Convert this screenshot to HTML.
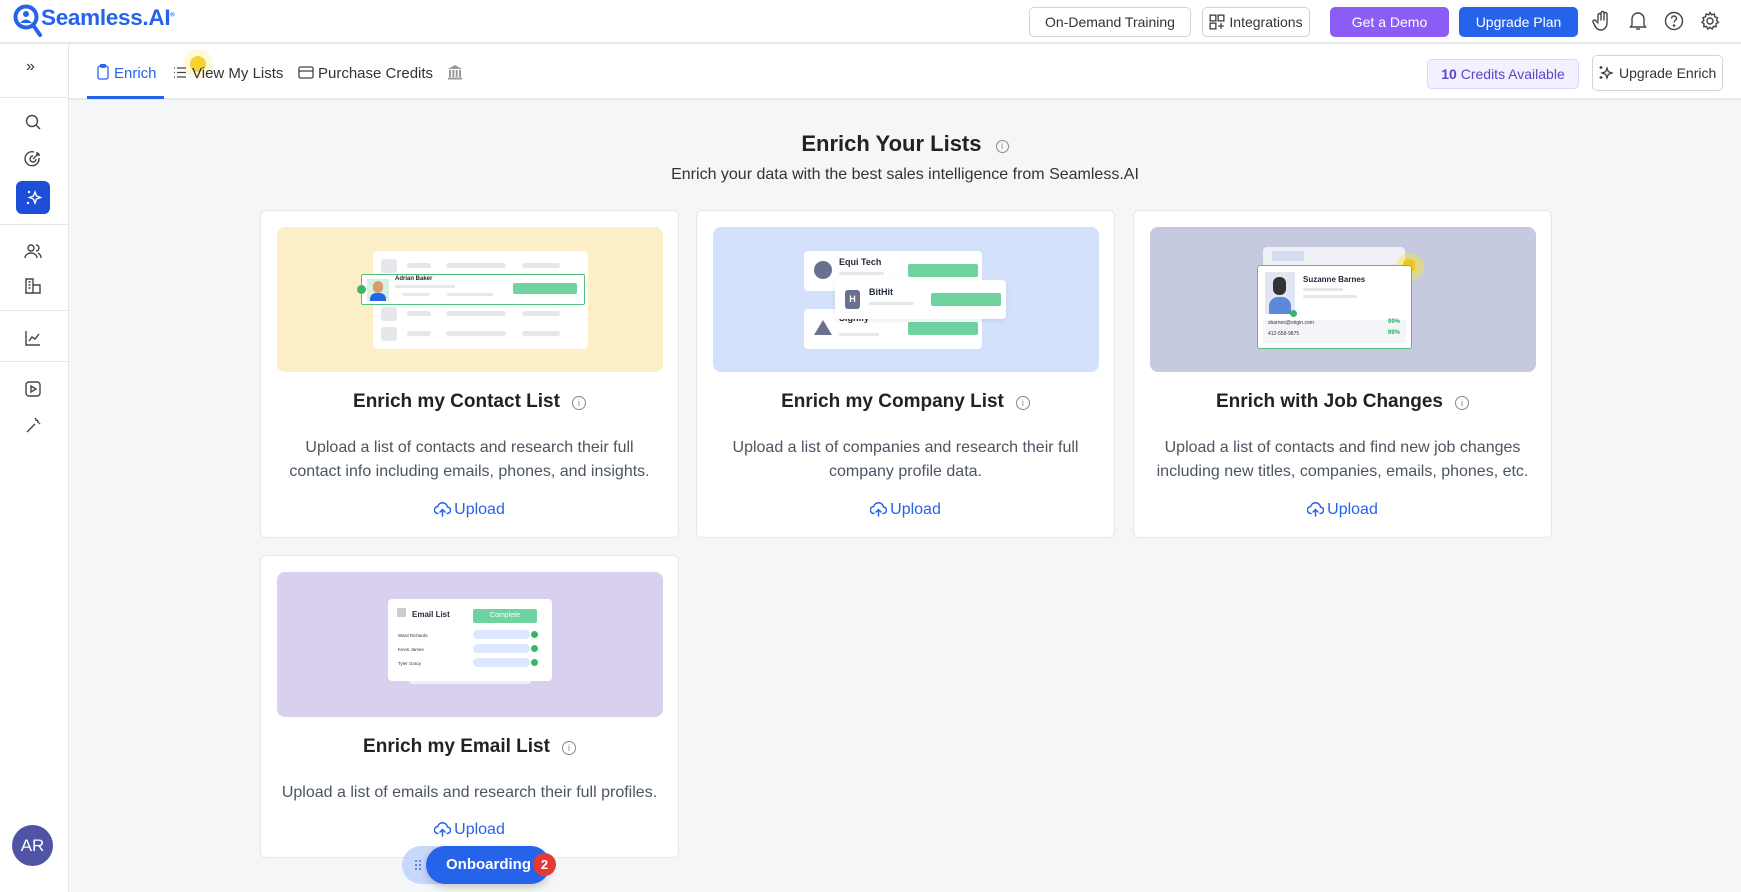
<!DOCTYPE html>
<html><head><meta charset="utf-8"><style>
*{box-sizing:border-box;margin:0;padding:0}
body{width:1741px;height:892px;overflow:hidden;font-family:"Liberation Sans",sans-serif;background:#f5f6f8;position:relative;color:#1f2937}
.abs{position:absolute;white-space:nowrap}
.hdr{left:0;top:0;width:1741px;height:44px;background:#fff;border-bottom:2px solid #e8e9ec}
.btn{position:absolute;top:7px;height:30px;border-radius:5px;font-size:14px;display:flex;align-items:center;justify-content:center;gap:4px;white-space:nowrap}
.side{left:0;top:44px;width:69px;height:848px;background:#fff;border-right:1px solid #e5e7eb}
.sep{position:absolute;left:0;width:68px;height:1px;background:#e5e7eb}
.si{position:absolute;left:24px;width:18px;height:18px}
.tabs{left:69px;top:45px;width:1672px;height:55px;background:#fff;border-bottom:2px solid #e8e9ec}
.card{position:absolute;background:#fff;border:1px solid #e5e7eb;border-radius:6px;width:419px;text-align:center}
.img{position:absolute;left:16px;top:16px;width:386px;height:145px;border-radius:8px;overflow:hidden}
.ct{position:absolute;left:0;width:100%;top:180px;font-size:19px;font-weight:bold;color:#222}
.ct i{display:inline-block;width:14px;height:14px;border:1.3px solid #888;border-radius:50%;margin-left:12px;vertical-align:1px;font-style:normal;font-size:9px;color:#888;line-height:12px;font-weight:normal}
.cd{position:absolute;left:17px;right:17px;top:225px;font-size:16px;line-height:24px;color:#4b5563}
.up{position:absolute;left:0;width:100%;font-size:16px;color:#2563eb}
.up svg{vertical-align:-3px;margin-right:3px}
.w{position:absolute;background:#fff;border-radius:4px}
.g{position:absolute;background:#e5e7eb;border-radius:3px}
.gr{position:absolute;background:#6fd3a0;border-radius:2px}
</style></head><body>
<div class="abs hdr">
 <svg class="abs" style="left:13px;top:4px" width="30" height="34" viewBox="0 0 30 34"><circle cx="13" cy="13" r="10.5" fill="none" stroke="#2563eb" stroke-width="4"/><line x1="20" y1="21" x2="27" y2="31" stroke="#2563eb" stroke-width="4" stroke-linecap="round"/><circle cx="13" cy="10" r="3" fill="#2563eb"/><path d="M7 19 Q13 12 19 19Z" fill="#2563eb"/></svg>
 <div class="abs" style="left:41px;top:5px;font-size:22.5px;font-weight:bold;color:#2563eb;letter-spacing:-0.3px">Seamless.AI<sup style="font-size:6px">®</sup></div>
 <div class="btn" style="left:1029px;width:162px;border:1px solid #d1d5db;color:#333">On-Demand Training</div>
 <div class="btn" style="left:1202px;width:108px;border:1px solid #d1d5db;color:#333"><svg width="16" height="16" viewBox="0 0 14 14" fill="none" stroke="#444" stroke-width="1.2"><rect x="1" y="1" width="5" height="5"/><rect x="8" y="1" width="5" height="5"/><rect x="1" y="8" width="5" height="5"/><path d="M10.5 8v5M8 10.5h5"/></svg>Integrations</div>
 <div class="btn" style="left:1330px;width:119px;background:#8b5cf6;color:#fff">Get a Demo</div>
 <div class="btn" style="left:1459px;width:119px;background:#2563eb;color:#fff">Upgrade Plan</div>
 <svg class="abs" style="left:1592px;top:10px" width="20" height="22" viewBox="0 0 20 22" fill="none" stroke="#444" stroke-width="1.4" stroke-linecap="round"><path d="M6 11V5a1.5 1.5 0 013 0v5M9 10V3a1.5 1.5 0 013 0v7M12 10V4a1.5 1.5 0 013 0v9c0 4-3 7-6 7s-5-2-6-4l-2-4a1.5 1.5 0 012.5-1.5L6 13"/></svg>
 <svg class="abs" style="left:1629px;top:11px" width="18" height="20" viewBox="0 0 18 20" fill="none" stroke="#444" stroke-width="1.4"><path d="M3 14V8a6 6 0 0112 0v6l1.5 2h-15z"/><path d="M7 18h4"/></svg>
 <svg class="abs" style="left:1664px;top:11px" width="20" height="20" viewBox="0 0 20 20" fill="none" stroke="#444" stroke-width="1.4"><circle cx="10" cy="10" r="8.5"/><path d="M7.5 7.5a2.5 2.5 0 115 0c0 2-2.5 2-2.5 4"/><circle cx="10" cy="14.5" r=".6" fill="#444"/></svg>
 <svg class="abs" style="left:1700px;top:11px" width="20" height="20" viewBox="0 0 20 20" fill="none" stroke="#444" stroke-width="1.4"><circle cx="10" cy="10" r="3"/><path d="M10 1.5l1.6 2.3 2.7-.8.5 2.8 2.7.9-1 2.6 1.9 2-2.4 1.5.2 2.8-2.8-.1-1.2 2.5-2.2-1.7-2.2 1.7-1.2-2.5-2.8.1.2-2.8L2 11.3l1.9-2-1-2.6 2.7-.9.5-2.8 2.7.8z"/></svg>
</div>
<div class="abs side">
 <div class="abs" style="left:26px;top:14px;font-size:16px;color:#333">»</div>
 <div class="sep" style="top:53px"></div>
 <svg class="si" style="top:69px" viewBox="0 0 18 18" fill="none" stroke="#444" stroke-width="1.4"><circle cx="8" cy="8" r="5.5"/><path d="M12 12l4 4"/></svg>
 <svg class="si" style="top:106px" viewBox="0 0 18 18" fill="none" stroke="#444" stroke-width="1.4"><path d="M15 8a7 7 0 11-5-6"/><path d="M12 9a3 3 0 11-3-3"/><path d="M9 9l6-6M13 2v3h3"/></svg>
 <div class="abs" style="left:16px;top:137px;width:34px;height:33px;background:#1d4ed8;border-radius:6px"></div>
 <svg class="si" style="top:145px;left:25px" viewBox="0 0 18 18" fill="#fff"><path d="M10 3l1.5 4 4 1.5-4 1.5L10 14l-1.5-4-4-1.5 4-1.5z" fill="none" stroke="#fff" stroke-width="1.4"/><circle cx="4" cy="3" r="1.2"/><circle cx="3" cy="14" r="1.2"/></svg>
 <div class="sep" style="top:180px"></div>
 <svg class="si" style="top:198px" viewBox="0 0 18 18" fill="none" stroke="#444" stroke-width="1.4"><circle cx="7" cy="6" r="3"/><path d="M1 16c0-3 3-5 6-5s6 2 6 5M12 3a3 3 0 010 6M14 11c2 1 3 3 3 5"/></svg>
 <svg class="si" style="top:233px" viewBox="0 0 18 18" fill="none" stroke="#444" stroke-width="1.4"><path d="M2 16V2h7v14M9 8h7v8H1M4.5 5h2M4.5 8h2M4.5 11h2"/></svg>
 <div class="sep" style="top:266px"></div>
 <svg class="si" style="top:285px" viewBox="0 0 18 18" fill="none" stroke="#444" stroke-width="1.4"><path d="M2 2v14h14M5 12l3-4 3 2 4-5"/></svg>
 <div class="sep" style="top:317px"></div>
 <svg class="si" style="top:336px" viewBox="0 0 18 18" fill="none" stroke="#444" stroke-width="1.4"><rect x="2" y="2" width="14" height="14" rx="3"/><path d="M7 6l5 3-5 3z"/></svg>
 <svg class="si" style="top:372px" viewBox="0 0 18 18" fill="none" stroke="#444" stroke-width="1.4"><path d="M3 16l8-8M12 3v2M15 6h-2M14 4l-1 1M11 2l1 1M16 8l-1-1"/></svg>
 <div class="abs" style="left:12px;top:781px;width:41px;height:41px;border-radius:50%;background:#4f54a6;color:#fff;font-size:17px;text-align:center;line-height:41px">AR</div>
</div>
<div class="abs tabs">
 <svg class="abs" style="left:28px;top:19px" width="12" height="16" viewBox="0 0 12 16" fill="none" stroke="#2563eb" stroke-width="1.3"><rect x="1" y="2" width="10" height="13" rx="2"/><rect x="3.5" y="0.7" width="5" height="2.5" rx="1"/></svg>
 <div class="abs" style="left:45px;top:20px;font-size:15px;color:#2563eb">Enrich</div>
 <div class="abs" style="left:18px;top:51px;width:77px;height:3px;background:#2563eb"></div>
 <div class="abs" style="left:114px;top:4px;width:30px;height:30px;border-radius:50%;background:rgba(250,220,60,.18)"></div>
 <div class="abs" style="left:121px;top:11px;width:16px;height:16px;border-radius:50%;background:#f5d32f"></div>
 <svg class="abs" style="left:105px;top:22px" width="12" height="11" viewBox="0 0 12 11" stroke="#444" stroke-width="1.3"><path d="M0 1h1M3 1h9M0 5.5h1M3 5.5h9M0 10h1M3 10h9"/></svg>
 <div class="abs" style="left:123px;top:20px;font-size:15px;color:#333">View My Lists</div>
 <svg class="abs" style="left:229px;top:21px" width="16" height="13" viewBox="0 0 16 13" fill="none" stroke="#444" stroke-width="1.3"><rect x="1" y="1" width="14" height="11" rx="1.5"/><path d="M1 5h14"/></svg>
 <div class="abs" style="left:249px;top:20px;font-size:15px;color:#333">Purchase Credits</div>
 <svg class="abs" style="left:378px;top:19px" width="16" height="16" viewBox="0 0 16 16" fill="#999"><path d="M8 1l7 4H1z"/><rect x="2" y="6" width="2" height="7"/><rect x="5.3" y="6" width="2" height="7"/><rect x="8.7" y="6" width="2" height="7"/><rect x="12" y="6" width="2" height="7"/><rect x="1" y="13.5" width="14" height="2"/></svg>
 <div class="abs" style="left:1358px;top:14px;width:152px;height:30px;border:1px solid #ddd6fe;background:#f3f0ff;border-radius:5px;font-size:14px;color:#5b45c9;text-align:center;line-height:28px"><b>10</b> Credits Available</div>
 <div class="abs" style="left:1523px;top:10px;width:131px;height:36px;border:1px solid #d1d5db;border-radius:5px;font-size:14px;color:#333;line-height:34px;padding-left:26px">Upgrade Enrich</div>
 <svg class="abs" style="left:1530px;top:20px" width="15" height="15" viewBox="0 0 15 15" fill="none" stroke="#333" stroke-width="1.2"><path d="M8 3l1.3 3.7L13 8l-3.7 1.3L8 13l-1.3-3.7L3 8l3.7-1.3z"/><path d="M2 1v3M.5 2.5h3M2 11v3M.5 12.5h3"/></svg>
</div>
<div class="abs" style="left:69px;top:131px;width:1672px;text-align:center;font-size:22px;font-weight:bold;color:#222">Enrich Your Lists <span style="display:inline-block;width:13px;height:13px;border:1.3px solid #888;border-radius:50%;margin-left:8px;font-size:9px;color:#888;line-height:11px;font-weight:normal;vertical-align:2px">i</span></div>
<div class="abs" style="left:69px;top:166px;width:1672px;text-align:center;font-size:16px;color:#333">Enrich your data with the best sales intelligence from Seamless.AI</div>

<!-- Card 1 -->
<div class="card" style="left:260px;top:210px;height:328px">
 <div class="img" style="background:#fcefc8">
  <div class="w" style="left:96px;top:24px;width:215px;height:98px"></div>
  <div class="g" style="left:104px;top:32px;width:16px;height:14px"></div><div class="g" style="left:130px;top:36px;width:24px;height:5px"></div><div class="g" style="left:169px;top:36px;width:60px;height:5px"></div><div class="g" style="left:245px;top:36px;width:38px;height:5px"></div>
  <div class="g" style="left:104px;top:80px;width:16px;height:14px"></div><div class="g" style="left:130px;top:84px;width:24px;height:5px"></div><div class="g" style="left:169px;top:84px;width:60px;height:5px"></div><div class="g" style="left:245px;top:84px;width:38px;height:5px"></div>
  <div class="g" style="left:104px;top:100px;width:16px;height:14px"></div><div class="g" style="left:130px;top:104px;width:24px;height:5px"></div><div class="g" style="left:169px;top:104px;width:60px;height:5px"></div><div class="g" style="left:245px;top:104px;width:38px;height:5px"></div>
  <div class="w" style="left:84px;top:47px;width:224px;height:31px;border:1px solid #4fc080;border-radius:2px"></div>
  <div class="abs" style="left:90px;top:52px;width:22px;height:22px;background:#d8f0e0"></div>
  <div class="abs" style="left:96px;top:54px;width:10px;height:12px;border-radius:5px;background:#d89a70"></div>
  <div class="abs" style="left:93px;top:66px;width:16px;height:8px;border-radius:6px 6px 0 0;background:#2563eb"></div>
  <div class="abs" style="left:80px;top:58px;width:9px;height:9px;border-radius:50%;background:#3bb56a"></div>
  <div class="abs" style="left:118px;top:49px;font-size:6px;font-weight:bold;color:#222">Adrian Baker</div>
  <div class="g" style="left:118px;top:58px;width:60px;height:3px"></div><div class="g" style="left:125px;top:66px;width:28px;height:3px"></div><div class="g" style="left:170px;top:66px;width:46px;height:3px"></div>
  <div class="gr" style="left:236px;top:56px;width:64px;height:11px"></div>
 </div>
 <div class="ct">Enrich my Contact List<i>i</i></div>
 <div class="cd">Upload a list of contacts and research their full<br>contact info including emails, phones, and insights.</div>
 <div class="up" style="top:290px"><svg width="17" height="15" viewBox="0 0 17 15" fill="none" stroke="#2563eb" stroke-width="1.5" stroke-linecap="round"><path d="M4 11.5a3.5 3.5 0 01-.3-7A5 5 0 0113.5 5a3.2 3.2 0 01-.5 6.5"/><path d="M8.5 14V7.5M6 10l2.5-2.5L11 10"/></svg>Upload</div>
</div>

<!-- Card 2 -->
<div class="card" style="left:696px;top:210px;height:328px">
 <div class="img" style="background:#d3e1fa">
  <div class="w" style="left:91px;top:24px;width:178px;height:40px"></div>
  <div class="abs" style="left:101px;top:34px;width:18px;height:18px;border-radius:50%;background:#6a7190"></div>
  <div class="abs" style="left:126px;top:30px;font-size:9px;font-weight:bold">Equi Tech</div>
  <div class="g" style="left:126px;top:45px;width:45px;height:3px"></div>
  <div class="gr" style="left:195px;top:37px;width:70px;height:13px"></div>
  <div class="w" style="left:91px;top:82px;width:178px;height:40px"></div>
  <div class="abs" style="left:101px;top:93px;width:0;height:0;border-left:9px solid transparent;border-right:9px solid transparent;border-bottom:15px solid #6a7190"></div>
  <div class="abs" style="left:126px;top:86px;font-size:9px;font-weight:bold">Signify</div>
  <div class="g" style="left:126px;top:106px;width:40px;height:3px"></div>
  <div class="gr" style="left:195px;top:95px;width:70px;height:13px"></div>
  <div class="w" style="left:122px;top:53px;width:171px;height:39px;box-shadow:0 2px 6px rgba(0,0,0,.08)"></div>
  <div class="abs" style="left:132px;top:63px;width:15px;height:19px;border-radius:3px;background:#6a7190;color:#fff;font-size:9px;text-align:center;line-height:19px;font-weight:bold">H</div>
  <div class="abs" style="left:156px;top:60px;font-size:9px;font-weight:bold">BitHit</div>
  <div class="g" style="left:156px;top:75px;width:45px;height:3px"></div>
  <div class="gr" style="left:218px;top:66px;width:70px;height:13px"></div>
 </div>
 <div class="ct">Enrich my Company List<i>i</i></div>
 <div class="cd">Upload a list of companies and research their full<br>company profile data.</div>
 <div class="up" style="top:290px"><svg width="17" height="15" viewBox="0 0 17 15" fill="none" stroke="#2563eb" stroke-width="1.5" stroke-linecap="round"><path d="M4 11.5a3.5 3.5 0 01-.3-7A5 5 0 0113.5 5a3.2 3.2 0 01-.5 6.5"/><path d="M8.5 14V7.5M6 10l2.5-2.5L11 10"/></svg>Upload</div>
</div>

<!-- Card 3 -->
<div class="card" style="left:1133px;top:210px;height:328px">
 <div class="img" style="background:#c5cadf">
  <div class="w" style="left:113px;top:20px;width:142px;height:25px;background:#eef0f6"></div>
  <div class="abs" style="left:122px;top:24px;width:32px;height:10px;background:#d5def0;border-radius:2px"></div>
  <div class="abs" style="left:246px;top:26px;width:28px;height:28px;border-radius:50%;background:rgba(250,230,60,.45)"></div>
  <div class="abs" style="left:253px;top:32px;width:12px;height:12px;border-radius:5px 5px 1px 1px;background:#f5c518"></div>
  <div class="w" style="left:107px;top:38px;width:155px;height:84px;border:1.5px solid #4fc080;border-radius:3px"></div>
  <div class="abs" style="left:115px;top:45px;width:30px;height:42px;background:#e1e6f2"></div>
  <div class="abs" style="left:123px;top:50px;width:13px;height:18px;border-radius:6px;background:#333"></div>
  <div class="abs" style="left:119px;top:70px;width:22px;height:17px;border-radius:9px 9px 0 0;background:#5c8ad8"></div>
  <div class="abs" style="left:140px;top:83px;width:7px;height:7px;border-radius:50%;background:#3bb56a"></div>
  <div class="abs" style="left:153px;top:48px;font-size:8px;font-weight:bold">Suzanne Barnes</div>
  <div class="g" style="left:153px;top:61px;width:40px;height:3px"></div><div class="g" style="left:153px;top:68px;width:54px;height:3px"></div>
  <div class="abs" style="left:113px;top:93px;width:143px;height:23px;background:#f3f5f9"></div>
  <div class="abs" style="left:118px;top:93px;font-size:5px;color:#333">sbarnes@origin.com</div>
  <div class="abs" style="left:118px;top:104px;font-size:5px;color:#333">412-558-9875</div>
  <div class="abs" style="left:238px;top:92px;font-size:6px;color:#2cae64;font-weight:bold">99%</div>
  <div class="abs" style="left:238px;top:103px;font-size:6px;color:#2cae64;font-weight:bold">99%</div>
 </div>
 <div class="ct">Enrich with Job Changes<i>i</i></div>
 <div class="cd" style="left:0;right:0;white-space:nowrap">Upload a list of contacts and find new job changes<br>including new titles, companies, emails, phones, etc.</div>
 <div class="up" style="top:290px"><svg width="17" height="15" viewBox="0 0 17 15" fill="none" stroke="#2563eb" stroke-width="1.5" stroke-linecap="round"><path d="M4 11.5a3.5 3.5 0 01-.3-7A5 5 0 0113.5 5a3.2 3.2 0 01-.5 6.5"/><path d="M8.5 14V7.5M6 10l2.5-2.5L11 10"/></svg>Upload</div>
</div>

<!-- Card 4 -->
<div class="card" style="left:260px;top:555px;height:303px">
 <div class="img" style="background:#d9d0ef">
  <div class="abs" style="left:132px;top:100px;width:122px;height:12px;background:#eef0f5;border-radius:3px"></div>
  <div class="abs" style="left:120px;top:92px;width:145px;height:12px;background:#f4f5f8;border-radius:3px"></div>
  <div class="w" style="left:111px;top:27px;width:164px;height:82px"></div>
  <div class="abs" style="left:120px;top:36px;width:9px;height:9px;background:#ccc"></div>
  <div class="abs" style="left:135px;top:38px;font-size:8px;font-weight:bold">Email List</div>
  <div class="abs" style="left:196px;top:37px;width:64px;height:14px;background:#6fd3a0;border-radius:2px;color:#fff;font-size:7px;line-height:14px">Complete</div>
  <div class="abs" style="left:121px;top:61px;font-size:4.5px;color:#333">Ward Richards</div>
  <div class="abs" style="left:121px;top:75px;font-size:4.5px;color:#333">Kevin James</div>
  <div class="abs" style="left:121px;top:89px;font-size:4.5px;color:#333">Tyler Gracy</div>
  <div class="abs" style="left:196px;top:58px;width:57px;height:9px;background:#dbe8fd;border-radius:5px"></div>
  <div class="abs" style="left:196px;top:72px;width:57px;height:9px;background:#dbe8fd;border-radius:5px"></div>
  <div class="abs" style="left:196px;top:86px;width:57px;height:9px;background:#dbe8fd;border-radius:5px"></div>
  <div class="abs" style="left:254px;top:59px;width:7px;height:7px;border-radius:50%;background:#3bb56a"></div>
  <div class="abs" style="left:254px;top:73px;width:7px;height:7px;border-radius:50%;background:#3bb56a"></div>
  <div class="abs" style="left:254px;top:87px;width:7px;height:7px;border-radius:50%;background:#3bb56a"></div>
 </div>
 <div class="ct">Enrich my Email List<i>i</i></div>
 <div class="cd" style="left:0;right:0;white-space:nowrap">Upload a list of emails and research their full profiles.</div>
 <div class="up" style="top:265px"><svg width="17" height="15" viewBox="0 0 17 15" fill="none" stroke="#2563eb" stroke-width="1.5" stroke-linecap="round"><path d="M4 11.5a3.5 3.5 0 01-.3-7A5 5 0 0113.5 5a3.2 3.2 0 01-.5 6.5"/><path d="M8.5 14V7.5M6 10l2.5-2.5L11 10"/></svg>Upload</div>
</div>

<!-- Onboarding -->
<div class="abs" style="left:402px;top:846px;width:60px;height:38px;border-radius:19px;background:#c7d8fb"></div>
<svg class="abs" style="left:414px;top:859px" width="8" height="12" viewBox="0 0 8 12" fill="#4a6bd0"><circle cx="2" cy="2" r="1"/><circle cx="6" cy="2" r="1"/><circle cx="2" cy="6" r="1"/><circle cx="6" cy="6" r="1"/><circle cx="2" cy="10" r="1"/><circle cx="6" cy="10" r="1"/></svg>
<div class="abs" style="left:426px;top:846px;width:124px;height:38px;border-radius:19px;background:#2563eb;color:#fff;font-size:15px;font-weight:bold;line-height:38px;padding-left:20px;box-shadow:0 3px 8px rgba(0,0,0,.2)">Onboarding</div>
<div class="abs" style="left:533px;top:853px;width:23px;height:23px;border-radius:50%;background:#e53935;color:#fff;font-size:13px;font-weight:bold;text-align:center;line-height:23px">2</div>
</body></html>
